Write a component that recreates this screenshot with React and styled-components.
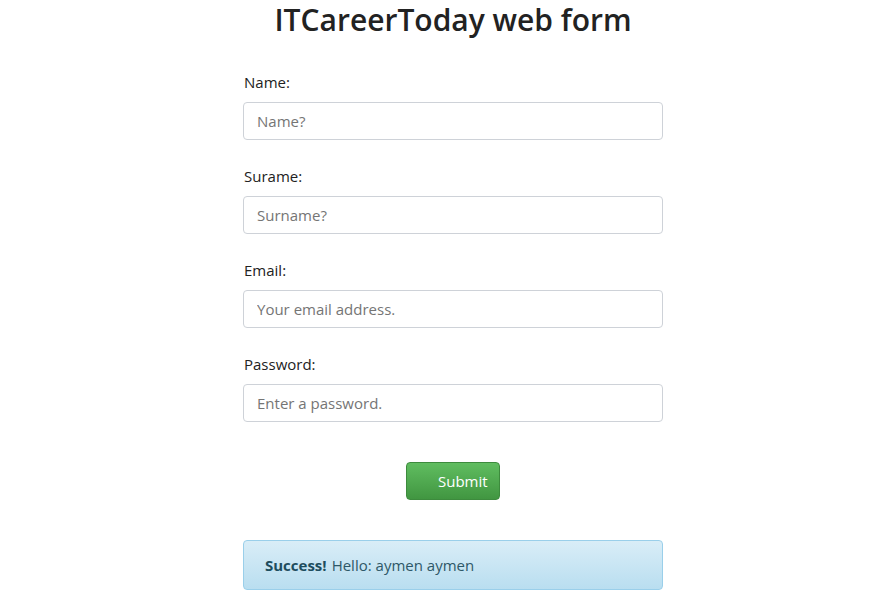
import React from "react"
import styled, { createGlobalStyle } from "styled-components"

const fields = [
    { label: "Name:", placeholder: "Name?", type: "text" },
    { label: "Surame:", placeholder: "Surname?", type: "text" },
    { label: "Email:", placeholder: "Your email address.", type: "email" },
    { label: "Password:", placeholder: "Enter a password.", type: "password" },
]

const GlobalStyle = createGlobalStyle`
    body {
        margin: 0;
        background: #fff;
        font-family: "Open Sans", "Noto Sans", sans-serif;
        font-size: 15px;
        color: #222;
    }
    * { box-sizing: border-box; }
`

export default function App() {
    return (
        <Outer>
            <GlobalStyle />
            <Page>
                <Title>ITCareerToday web form</Title>
                <Form onSubmit={e => e.preventDefault()}>
                    {fields.map((item, index) => (
                        <Group key={index}>
                            <Label>{item.label}</Label>
                            <Input type={item.type} placeholder={item.placeholder} />
                        </Group>
                    ))}
                    <ButtonRow>
                        <SubmitButton type="submit">Submit</SubmitButton>
                    </ButtonRow>
                </Form>
                <Alert>
                    <strong>Success!</strong> Hello: aymen aymen
                </Alert>
            </Page>
        </Outer>
    )
}

const Outer = styled.div`
    padding-left: 37px;
`
const Page = styled.div`
    width: 420px;
    margin: 0 auto;
    display: flex;
    flex-direction: column;
`
const Title = styled.h1`
    margin: 1px 0 0;
    text-align: center;
    font-size: 30px;
    line-height: 38px;
    font-weight: 600;
    color: #222;
`
const Form = styled.form`
    display: flex;
    flex-direction: column;
    gap: 26px;
    margin-top: 33px;
`
const Group = styled.div`
    display: flex;
    flex-direction: column;
    gap: 10px;
`
const Label = styled.label`
    padding-left: 1px;
    font-size: 15px;
    line-height: 20px;
    color: #222;
`
const Input = styled.input`
    width: 100%;
    height: 38px;
    padding: 0 13px;
    border: 1px solid #ced2d8;
    border-radius: 4px;
    font-family: inherit;
    font-size: 15px;
    color: #495057;
    background: #fff;

    ::placeholder {
        color: #6c727a;
    }
`
const ButtonRow = styled.div`
    display: flex;
    justify-content: center;
    margin-top: 14px;
`
const SubmitButton = styled.button`
    width: 94px;
    height: 38px;
    padding: 0 12px 0 31px;
    border: 1px solid #3d8b3d;
    border-radius: 4px;
    background: linear-gradient(to bottom, #60bd60 0%, #419641 100%);
    color: #fff;
    font-family: inherit;
    font-size: 15px;
    text-align: left;
`
const Alert = styled.div`
    margin-top: 40px;
    height: 50px;
    display: flex;
    align-items: center;
    padding: 0 21px;
    border: 1px solid #9acfea;
    border-radius: 4px;
    background: linear-gradient(to bottom, #d9edf7 0%, #b9def0 100%);
    color: #2e5868;
    font-size: 15px;

    strong {
        color: #1d4d5e;
        margin-right: 5px;
    }
`
